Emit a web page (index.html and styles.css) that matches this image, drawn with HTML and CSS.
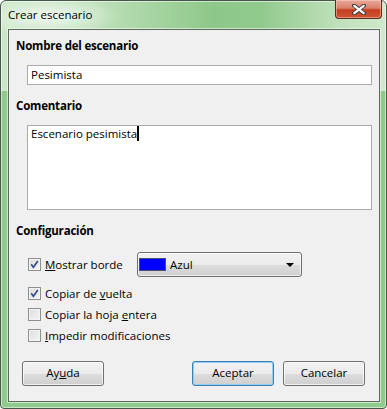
FILE: index.html
```html
<!DOCTYPE html>
<html lang="es">
<head>
    <meta charset="UTF-8">
    <meta name="viewport" content="width=device-width, initial-scale=1.0">
    <title>Crear escenario</title>
    <link rel="stylesheet" href="styles.css">
</head>
<body>
    <div class="window">
        <div class="titlebar">
            <span class="title">Crear escenario</span>
            <div class="close">
                <svg width="14" height="11" viewBox="0 0 14 11">
                    <path d="M2 1.5 L12 9.5 M12 1.5 L2 9.5" stroke="#3b3b3b" stroke-width="4" stroke-linecap="round"/>
                    <path d="M2.3 1.8 L11.7 9.2 M11.7 1.8 L2.3 9.2" stroke="#fff" stroke-width="2.2" stroke-linecap="round"/>
                </svg>
            </div>
        </div>

        <div class="client">
            <div class="heading">Nombre del escenario</div>
            <div class="field">Pesimista</div>

            <div class="heading second">Comentario</div>
            <div class="memo">Escenario pesimista<span class="caret"></span></div>

            <div class="heading third">Configuración</div>
            <div class="opt first">
                <div class="check wide">
                    <span class="box on"></span>
                    <span><u>M</u>ostrar borde</span>
                </div>
                <div class="combo">
                    <span class="swatch"></span>
                    <span class="combo-text">Azul</span>
                    <span class="arrow"></span>
                </div>
            </div>
            <div class="opt">
                <div class="check">
                    <span class="box on"></span>
                    <span>Copiar de <u>v</u>uelta</span>
                </div>
            </div>
            <div class="opt">
                <div class="check">
                    <span class="box"></span>
                    <span>Copiar la hoja <u>e</u>ntera</span>
                </div>
            </div>
            <div class="opt">
                <div class="check">
                    <span class="box"></span>
                    <span><u>I</u>mpedir modificaciones</span>
                </div>
            </div>

            <div class="buttons">
                <div class="btn">Ay<u>u</u>da</div>
                <div class="spacer"></div>
                <div class="btn default">Aceptar</div>
                <div class="btn">Cancelar</div>
            </div>
        </div>
    </div>
</body>
</html>
```

FILE: styles.css
```css
body {
    margin: 0;
    font-family: "Open Sans", "Liberation Sans", sans-serif;
    font-size: 11.5px;
    color: #000;
}

.window {
    width: 387px;
    height: 409px;
    box-sizing: border-box;
    border: 1px solid #46584a;
    border-radius: 6px 6px 4px 4px;
    box-shadow: inset 0 0 0 1px rgba(255, 255, 255, 0.55);
    background:
        radial-gradient(ellipse 70px 20px at 50px 15px, rgba(255, 255, 255, 0.75), rgba(255, 255, 255, 0)),
        linear-gradient(180deg, rgba(142, 203, 138, 0) 0, rgba(142, 203, 138, 0) 90px, #8fcb8b 90px),
        linear-gradient(90deg, #cde8c9 0%, #bde0b9 25%, #8ec889 55%, #92ca8e 68%, #c0e1bc 88%, #d0e9cc 100%);
    display: flex;
    flex-direction: column;
}

.titlebar {
    height: 28px;
    display: flex;
    align-items: flex-start;
    justify-content: space-between;
}

.title {
    margin: 5px 0 0 7px;
    line-height: 18px;
}

.close {
    width: 47px;
    height: 19px;
    box-sizing: border-box;
    margin: -1px 4px 0 0;
    border: 1px solid #5e2b21;
    border-top: none;
    border-radius: 0 0 4px 4px;
    background: linear-gradient(180deg, #e8a998 0%, #d9816c 45%, #c4401f 55%, #cf5634 100%);
    box-shadow: inset 0 0 0 1px rgba(255, 220, 210, 0.45);
    display: flex;
    align-items: center;
    justify-content: center;
}

.client {
    height: 373px;
    box-sizing: border-box;
    margin: 0 6px 0 7px;
    border: 1px solid #5b6a5d;
    box-shadow: 0 0 0 1px rgba(255, 255, 255, 0.55);
    background-color: #f0f0f0;
    padding: 8px 7px 0 7px;
    display: flex;
    flex-direction: column;
}

.heading {
    font-weight: bold;
    line-height: 16px;
    letter-spacing: -0.2px;
}

.second,
.third {
    margin-top: 13px;
}

.field {
    margin: 11px 0 0 11px;
    height: 20px;
    box-sizing: border-box;
    border: 1px solid #ababab;
    background-color: #fff;
    padding-left: 3px;
    line-height: 18px;
}

.memo {
    margin: 11px 0 0 11px;
    height: 85px;
    box-sizing: border-box;
    border: 1px solid #ababab;
    background-color: #fff;
    padding: 0 3px;
    line-height: 15px;
}

.caret {
    display: inline-block;
    width: 2px;
    height: 15px;
    background-color: #000;
    vertical-align: top;
}

.opt {
    height: 21px;
    display: flex;
    align-items: center;
    padding-left: 12px;
}

.opt.first {
    height: 25px;
    margin-top: 13px;
    margin-bottom: 6px;
}

.check {
    display: flex;
    align-items: center;
    gap: 4px;
}

.check.wide {
    width: 109px;
}

.box {
    width: 13px;
    height: 13px;
    box-sizing: border-box;
    border: 1px solid #8f8f8f;
    background: linear-gradient(135deg, #dcdcdc 0%, #f6f6f6 100%);
    box-shadow: inset 0 0 0 1px #f4f4f4;
}

.box.on {
    background:
        url("data:image/svg+xml;utf8,<svg xmlns='http://www.w3.org/2000/svg' width='11' height='11'><path d='M2.2 5.2 L4.4 8.2 L8.8 2' fill='none' stroke='%23354f8f' stroke-width='1.7'/></svg>") center / 11px 11px no-repeat,
        linear-gradient(135deg, #dcdcdc 0%, #f6f6f6 100%);
}

.combo {
    width: 165px;
    height: 25px;
    box-sizing: border-box;
    border: 1px solid #707070;
    border-radius: 3px;
    background: linear-gradient(180deg, #f2f2f2 0%, #ebebeb 50%, #dddddd 51%, #cfcfcf 100%);
    box-shadow: inset 0 0 0 1px rgba(255, 255, 255, 0.6);
    display: flex;
    align-items: center;
    padding: 0 7px 0 1px;
}

.swatch {
    width: 27px;
    height: 13px;
    box-sizing: border-box;
    border: 1px solid #4a4a6a;
    background-color: #0000ff;
}

.combo-text {
    margin-left: 4px;
    flex: 1;
}

.arrow {
    width: 0;
    height: 0;
    border-left: 4px solid transparent;
    border-right: 4px solid transparent;
    border-top: 4px solid #000;
}

.buttons {
    display: flex;
    gap: 9px;
    margin: 15px 7px 0 6px;
}

.spacer {
    flex: 1;
}

.btn {
    width: 82px;
    height: 25px;
    box-sizing: border-box;
    border: 1px solid #707070;
    border-radius: 3px;
    background: linear-gradient(180deg, #f2f2f2 0%, #ebebeb 50%, #dddddd 51%, #cfcfcf 100%);
    box-shadow: inset 0 0 0 1px rgba(255, 255, 255, 0.7);
    text-align: center;
    line-height: 22px;
}

.btn.default {
    border-color: #3c7fb1;
    box-shadow: inset 0 0 0 1px #8fd0f5;
}
```
